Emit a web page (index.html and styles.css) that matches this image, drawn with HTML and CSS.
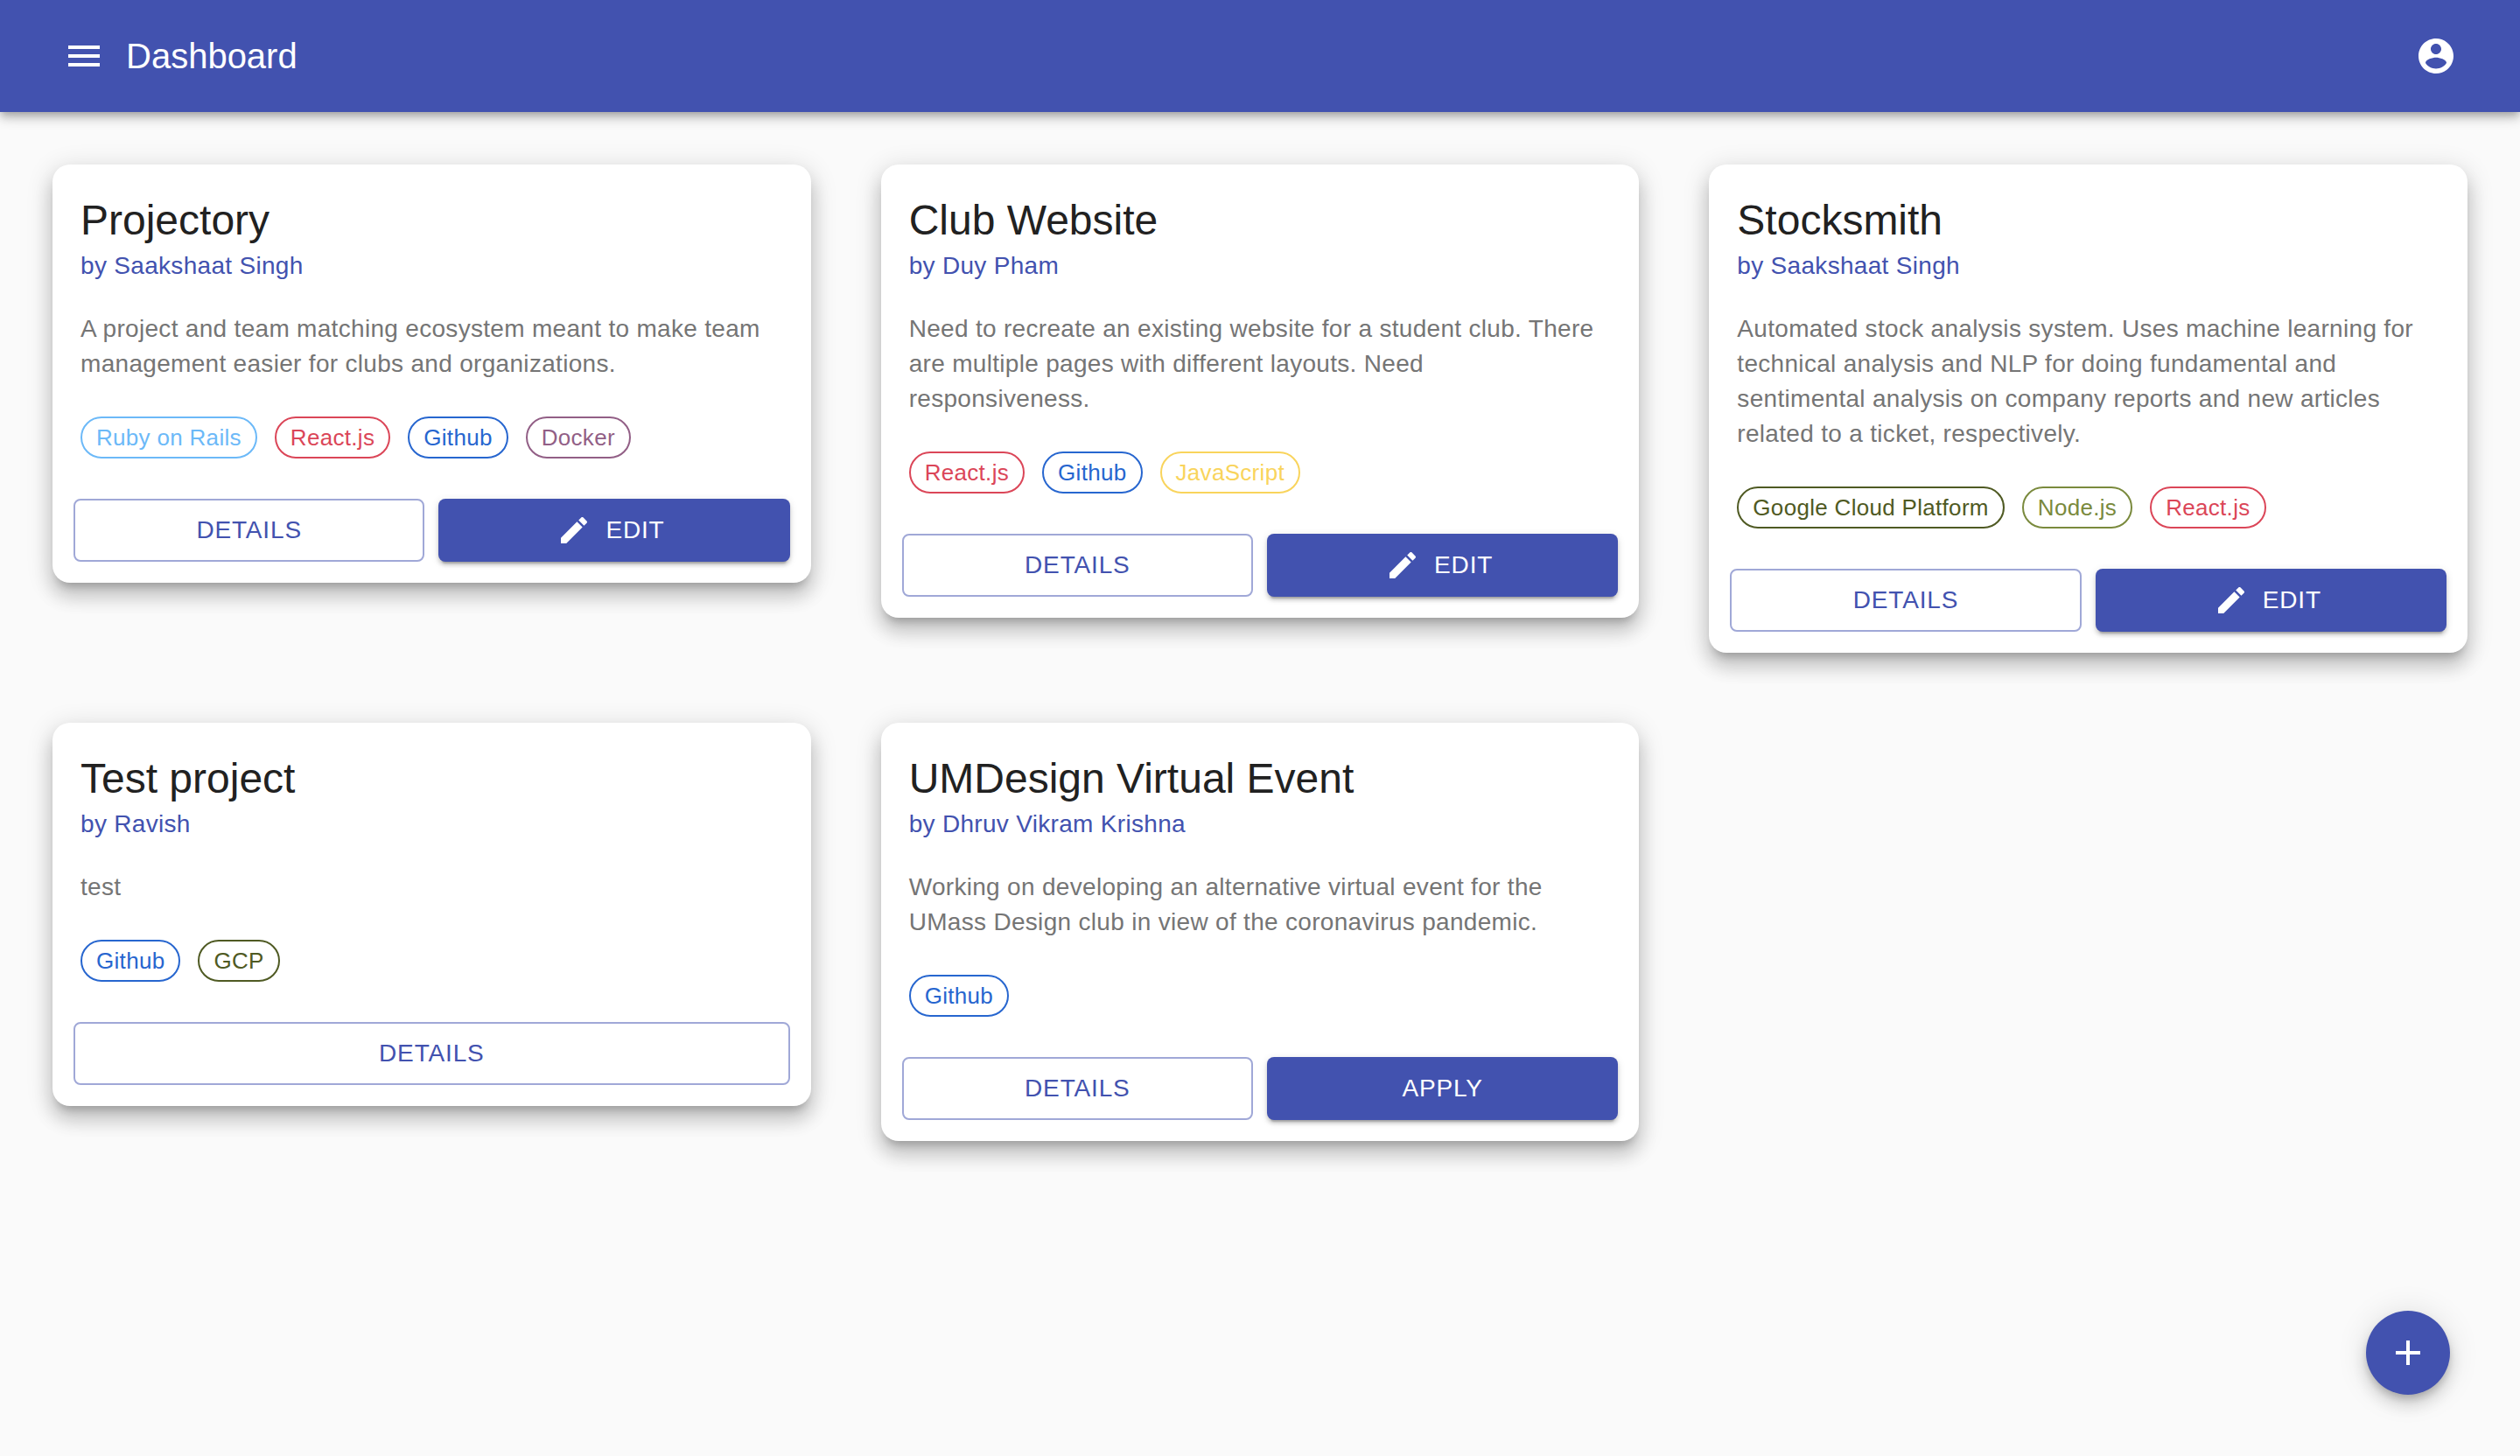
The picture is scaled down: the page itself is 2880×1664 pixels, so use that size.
FILE: index.html
```html
<!DOCTYPE html>
<html lang="en">
<head>
<meta charset="utf-8">
<meta name="viewport" content="width=device-width, initial-scale=1">
<title>Dashboard</title>
<link rel="stylesheet" href="styles.css">
</head>
<body>
<svg class="sprite" aria-hidden="true">
  <symbol id="icon-edit" viewBox="0 0 24 24"><path d="M3 17.25V21h3.75L17.81 9.94l-3.75-3.75L3 17.25zM20.71 7.04c.39-.39.39-1.02 0-1.41l-2.34-2.34c-.39-.39-1.02-.39-1.41 0l-1.83 1.83 3.75 3.75 1.83-1.83z"/></symbol>
</svg>
<header class="app-bar">
  <button class="icon-button" type="button" aria-label="Open menu">
    <svg class="icon" viewBox="0 0 24 24"><path d="M3 18h18v-2H3v2zm0-5h18v-2H3v2zm0-7v2h18V6H3z"/></svg>
  </button>
  <h1 class="app-title">Dashboard</h1>
  <button class="icon-button" type="button" aria-label="Account">
    <svg class="icon" viewBox="0 0 24 24"><path d="M12 2C6.48 2 2 6.48 2 12s4.480 10 10 10 10-4.480 10-10S17.520 2 12 2zm0 3c1.660 0 3 1.340 3 3s-1.340 3-3 3-3-1.340-3-3 1.340-3 3-3zm0 14.200c-2.500 0-4.710-1.280-6-3.220.03-1.990 4-3.080 6-3.080 1.990 0 5.970 1.090 6 3.080-1.290 1.940-3.500 3.220-6 3.220z"/></svg>
  </button>
</header>

<main class="projects">
  <article class="card">
    <div class="card-content">
      <h2 class="card-title">Projectory</h2>
      <p class="card-author">by Saakshaat Singh</p>
      <p class="card-text">A project and team matching ecosystem meant to make team management easier for clubs and organizations.</p>
      <ul class="chips">
        <li class="chip chip-rails">Ruby on Rails</li>
        <li class="chip chip-react">React.js</li>
        <li class="chip chip-github">Github</li>
        <li class="chip chip-docker">Docker</li>
      </ul>
    </div>
    <div class="card-actions">
      <button class="button button-outlined" type="button">DETAILS</button>
      <button class="button button-contained" type="button"><svg class="button-icon"><use href="#icon-edit"/></svg>EDIT</button>
    </div>
  </article>

  <article class="card">
    <div class="card-content">
      <h2 class="card-title">Club Website</h2>
      <p class="card-author">by Duy Pham</p>
      <p class="card-text">Need to recreate an existing website for a student club. There are multiple pages with different layouts. Need responsiveness.</p>
      <ul class="chips">
        <li class="chip chip-react">React.js</li>
        <li class="chip chip-github">Github</li>
        <li class="chip chip-javascript">JavaScript</li>
      </ul>
    </div>
    <div class="card-actions">
      <button class="button button-outlined" type="button">DETAILS</button>
      <button class="button button-contained" type="button"><svg class="button-icon"><use href="#icon-edit"/></svg>EDIT</button>
    </div>
  </article>

  <article class="card">
    <div class="card-content">
      <h2 class="card-title">Stocksmith</h2>
      <p class="card-author">by Saakshaat Singh</p>
      <p class="card-text">Automated stock analysis system. Uses machine learning for technical analysis and NLP for doing fundamental and sentimental analysis on company reports and new articles related to a ticket, respectively.</p>
      <ul class="chips">
        <li class="chip chip-gcp">Google Cloud Platform</li>
        <li class="chip chip-node">Node.js</li>
        <li class="chip chip-react">React.js</li>
      </ul>
    </div>
    <div class="card-actions">
      <button class="button button-outlined" type="button">DETAILS</button>
      <button class="button button-contained" type="button"><svg class="button-icon"><use href="#icon-edit"/></svg>EDIT</button>
    </div>
  </article>

  <article class="card">
    <div class="card-content">
      <h2 class="card-title">Test project</h2>
      <p class="card-author">by Ravish</p>
      <p class="card-text">test</p>
      <ul class="chips">
        <li class="chip chip-github">Github</li>
        <li class="chip chip-gcp">GCP</li>
      </ul>
    </div>
    <div class="card-actions">
      <button class="button button-outlined" type="button">DETAILS</button>
    </div>
  </article>

  <article class="card">
    <div class="card-content">
      <h2 class="card-title">UMDesign Virtual Event</h2>
      <p class="card-author">by Dhruv Vikram Krishna</p>
      <p class="card-text">Working on developing an alternative virtual event for the UMass Design club in view of the coronavirus pandemic.</p>
      <ul class="chips">
        <li class="chip chip-github">Github</li>
      </ul>
    </div>
    <div class="card-actions">
      <button class="button button-outlined" type="button">DETAILS</button>
      <button class="button button-contained" type="button">APPLY</button>
    </div>
  </article>
</main>

<button class="fab" type="button" aria-label="Add project">
  <svg class="icon" viewBox="0 0 24 24"><path d="M19 13h-6v6h-2v-6H5v-2h6V5h2v6h6v2z"/></svg>
</button>
</body>
</html>
```
FILE: styles.css
```css
:root {
  --primary: #4252af;
  --primary-border: #a0a8d7;
}

*,
*::before,
*::after {
  box-sizing: border-box;
}

body {
  margin: 0;
  min-height: 100vh;
  background: #fafafa;
  color: #212121;
  font-family: "Liberation Sans", Helvetica, Arial, sans-serif;
  font-size: 28px;
  line-height: 40px;
  letter-spacing: 0.011em;
}

h1, h2, p, ul {
  margin: 0;
  padding: 0;
  font-weight: 400;
}

button {
  margin: 0;
  border: 0;
  font: inherit;
  cursor: pointer;
}

.sprite {
  display: none;
}

.icon {
  display: block;
  width: 48px;
  height: 48px;
  fill: currentColor;
}

.app-bar {
  position: relative;
  display: flex;
  align-items: center;
  min-height: 128px;
  padding: 0 48px;
  background: var(--primary);
  color: #fff;
  box-shadow: 0 4px 8px -2px rgba(0, 0, 0, 0.2), 0 8px 10px 0 rgba(0, 0, 0, 0.14), 0 2px 20px 0 rgba(0, 0, 0, 0.12);
}

.icon-button {
  padding: 24px;
  border-radius: 50%;
  background: none;
  color: inherit;
}

.app-title {
  flex: 1;
  font-size: 40px;
  line-height: 64px;
  letter-spacing: 0;
}

.projects {
  display: grid;
  grid-template-columns: repeat(3, 1fr);
  align-items: start;
  gap: 80px;
  padding: 60px;
}

.card {
  border-radius: 20px;
  background: #fff;
  box-shadow: 0 10px 10px -6px rgba(0, 0, 0, 0.2), 0 16px 20px 2px rgba(0, 0, 0, 0.14), 0 6px 28px 4px rgba(0, 0, 0, 0.12);
}

.card-content {
  padding: 32px 32px 22px;
}

.card-title {
  font-size: 48px;
  line-height: 64px;
  letter-spacing: 0;
}

.card-author {
  color: var(--primary);
}

.card-text {
  margin: 32px 0 40px;
  padding-right: 8px;
  color: #757575;
}

.chips {
  display: flex;
  flex-wrap: wrap;
  gap: 20px;
  list-style: none;
}

.chip {
  height: 48px;
  padding: 0 16px;
  border: 2px solid currentColor;
  border-radius: 24px;
  font-size: 26px;
  line-height: 44px;
}

.chip-rails { color: #6cb9f8; }
.chip-react { color: #db4658; }
.chip-github { color: #2766cf; }
.chip-docker { color: #925f86; }
.chip-javascript { color: #f9d45c; }
.chip-gcp { color: #4f5a23; }
.chip-node { color: #7a8a3d; }

.card-actions {
  display: grid;
  grid-auto-flow: column;
  grid-auto-columns: 1fr;
  gap: 16px;
  padding: 24px;
}

.button {
  display: flex;
  align-items: center;
  justify-content: center;
  min-height: 72px;
  padding: 0 32px;
  border-radius: 8px;
  letter-spacing: 0.03em;
}

.button-outlined {
  border: 2px solid var(--primary-border);
  background: none;
  color: var(--primary);
}

.button-contained {
  background: var(--primary);
  color: #fff;
  box-shadow: 0 6px 2px -4px rgba(0, 0, 0, 0.2), 0 4px 4px 0 rgba(0, 0, 0, 0.14), 0 2px 10px 0 rgba(0, 0, 0, 0.12);
}

.button-icon {
  width: 40px;
  height: 40px;
  margin: 0 16px 0 -8px;
  fill: currentColor;
}

.fab {
  position: fixed;
  right: 80px;
  bottom: 70px;
  display: grid;
  place-items: center;
  width: 96px;
  height: 96px;
  border-radius: 50%;
  background: var(--primary);
  color: #fff;
  box-shadow: 0 6px 10px -2px rgba(0, 0, 0, 0.2), 0 12px 20px 0 rgba(0, 0, 0, 0.14), 0 2px 36px 0 rgba(0, 0, 0, 0.12);
}
```
